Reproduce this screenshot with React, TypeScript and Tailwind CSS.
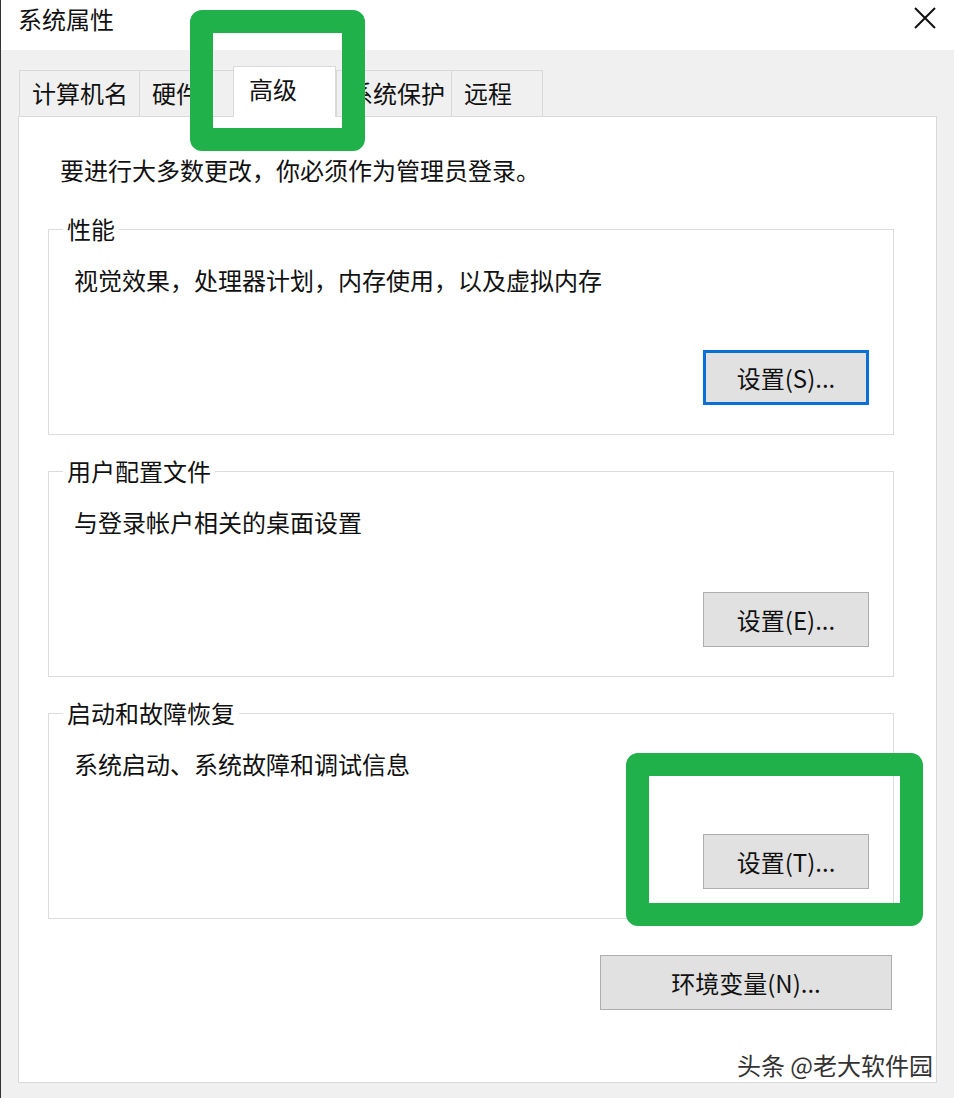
const TABS = [
  { label: "计算机名", width: "w-[120px]", selected: false },
  { label: "硬件", width: "w-[94px]", selected: false },
  { label: "高级", width: "w-[103px]", selected: true },
  { label: "系统保护", width: "w-[115px]", selected: false },
  { label: "远程", width: "w-[92px]", selected: false },
]

const GROUPS = [
  {
    title: "性能",
    description: "视觉效果，处理器计划，内存使用，以及虚拟内存",
    button: "设置(S)...",
    focused: true,
  },
  {
    title: "用户配置文件",
    description: "与登录帐户相关的桌面设置",
    button: "设置(E)...",
    focused: false,
  },
  {
    title: "启动和故障恢复",
    description: "系统启动、系统故障和调试信息",
    button: "设置(T)...",
    focused: false,
  },
]

function WinButton({ label, focused, width }: { label: string; focused?: boolean; width: string }) {
  return (
    <button
      className={
        "h-[55px] bg-[#e1e1e1] text-[24px] text-[#111] leading-none flex items-center justify-center " +
        width +
        (focused ? " border-[3px] border-[#0a6fd6]" : " border border-[#adadad]")
      }
    >
      {label}
    </button>
  )
}

export default function App() {
  return (
    <div className="w-[954px] h-[1098px] bg-[#f0f0f0] border-l border-[#333] relative overflow-hidden font-['Microsoft_YaHei_UI','Noto_Sans_CJK_SC',sans-serif] text-[#111]">
      {/* title bar */}
      <div className="h-[50px] bg-white flex items-start justify-between pl-[17px] pr-[17px] pt-[4px]">
        <span className="text-[24px] leading-[30px] text-[#111]">系统属性</span>
        <svg width="24" height="24" viewBox="0 0 24 24" className="mt-[2px]">
          <path d="M2 2 L22 22 M22 2 L2 22" stroke="#111" strokeWidth="2" fill="none" />
        </svg>
      </div>

      {/* tabs */}
      <div className="h-[66px] flex items-end pl-[18px] relative z-10">
        {TABS.map((tab) =>
          tab.selected ? (
            <div
              key={tab.label}
              className={
                tab.width +
                " h-[51px] -mb-px bg-white border border-b-0 border-[#d9d9d9] pl-[15px] pt-[6px] text-[24px] leading-[32px]"
              }
            >
              {tab.label}
            </div>
          ) : (
            <div
              key={tab.label}
              className={
                tab.width +
                " h-[46px] bg-[#f0f0f0] border border-b-0 border-r-0 last:border-r border-[#d9d9d9] pl-[12px] pb-[2px] flex items-center text-[24px] leading-none"
              }
            >
              {tab.label}
            </div>
          ),
        )}
      </div>

      {/* panel */}
      <div className="ml-[17px] w-[919px] h-[967px] bg-white border border-[#d9d9d9] flex flex-col pl-[29px]">
        <p className="mt-[37px] ml-[12px] text-[24px] leading-[32px]">要进行大多数更改，你必须作为管理员登录。</p>

        {GROUPS.map((group, idx) => (
          <fieldset
            key={group.title}
            className={"w-[846px] border border-[#dcdcdc] pb-[29px] " + (idx === 0 ? "mt-[27px]" : "mt-[20px]")}
          >
            <legend className="ml-[14px] px-[4px] text-[24px] leading-[32px]">{group.title}</legend>
            <p className="mt-[19px] ml-[25px] text-[24px] leading-[32px]">{group.description}</p>
            <div className="mt-[54px] mr-[24px] flex justify-end">
              <WinButton label={group.button} focused={group.focused} width="w-[166px]" />
            </div>
          </fieldset>
        ))}

        <div className="mt-[36px] mr-[44px] self-end">
          <WinButton label="环境变量(N)..." width="w-[292px]" />
        </div>
      </div>

      {/* watermark */}
      <div className="absolute right-[21px] top-[1049px] text-[24px] leading-[32px] text-[#333] [text-shadow:0_0_2px_#fff,0_0_2px_#fff]">
        头条 @老大软件园
      </div>

      {/* highlight boxes */}
      <div className="absolute left-[189px] top-[10px] w-[175px] h-[141px] border-[23px] border-[#21b14b] rounded-[12px] z-20" />
      <div className="absolute left-[625px] top-[753px] w-[297px] h-[173px] border-[23px] border-[#21b14b] rounded-[12px] z-20" />
    </div>
  )
}
